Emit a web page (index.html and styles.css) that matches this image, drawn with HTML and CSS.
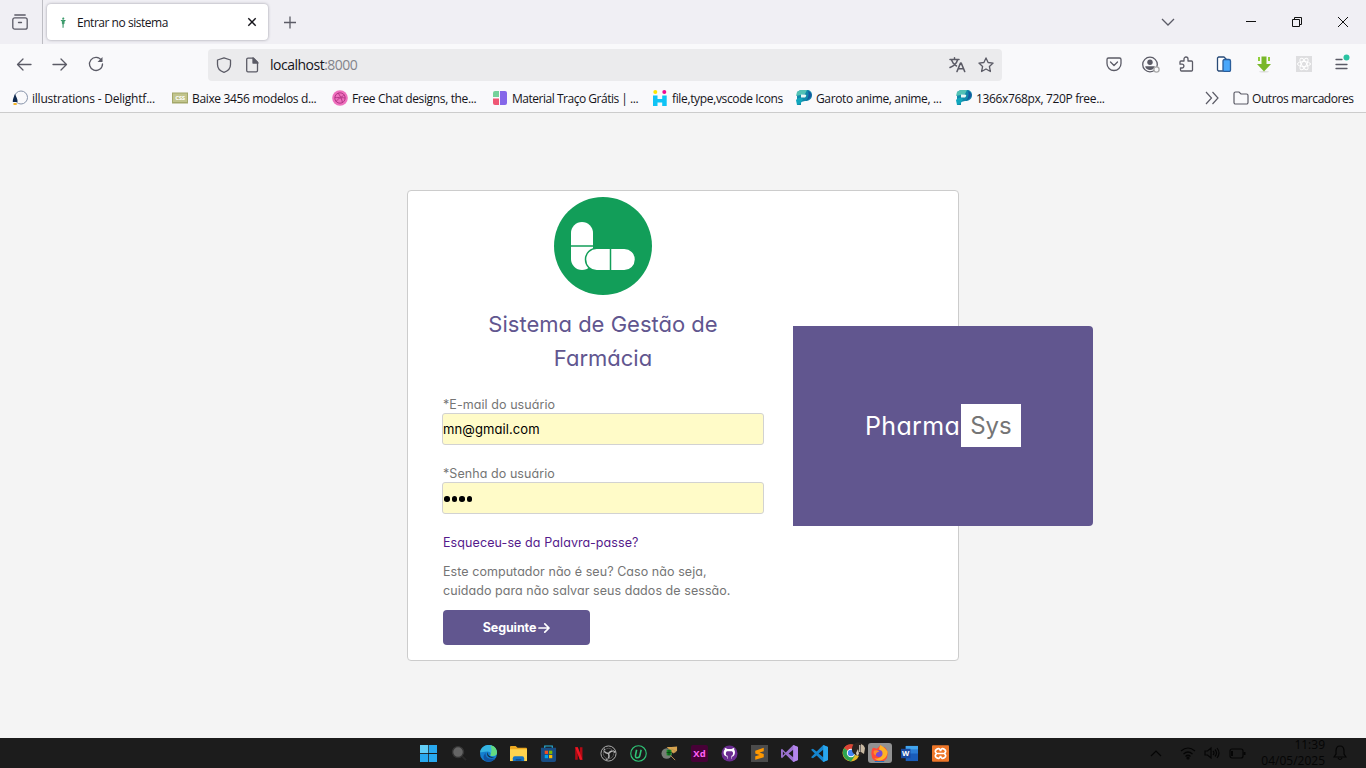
FILE: index.html
```html
<!DOCTYPE html>
<html lang="pt">
<head>
<meta charset="utf-8">
<title>Entrar no sistema</title>
<link rel="stylesheet" href="styles.css">
</head>
<body>
<header class="browser">
  <div class="tabs">
    <div class="recent"><svg width="16" height="16" viewBox="0 0 16 16" fill="none" stroke="#5b5b66" stroke-width="1.3" stroke-linecap="round"><path d="M2.800 1h10.400"/><rect x=".8" y="3.800" width="14.400" height="11.400" rx="2"/><path d="M6.500 8.500h3"/></svg></div>
    <div class="tab">
      <svg class="fav" width="16" height="16" viewBox="0 0 16 16"><circle cx="8.300" cy="4.500" r="1" fill="#2a9560"/><path d="M5.500 6h5.500l-1.500 1.500v2l-1 1v3h-.8v-3l-.8-1V7.500z" fill="#2a9560"/><path d="M8 4v10" stroke="#64a987" stroke-width=".7"/></svg>
      <span class="tabname">Entrar no sistema</span>
      <svg width="16" height="16" viewBox="0 0 16 16" stroke="#15141a" stroke-width="1.400"><path d="m4.300 4.300 7.400 7.400m0-7.400-7.400 7.400"/></svg>
    </div>
    <svg class="plus" width="16" height="16" viewBox="0 0 16 16" stroke="#5b5b66" stroke-width="1.300"><path d="M2 8.500h12M8 2.500v12"/></svg>
    <div class="winctl">
      <svg width="16" height="16" viewBox="0 0 16 16" fill="none" stroke="#5b5b66" stroke-width="1.300"><path d="m2 5 6 6 6-6"/></svg>
      <svg width="12" height="12" viewBox="0 0 12 12" stroke="#111"><path d="M1 5.500h10"/></svg>
      <svg width="12" height="12" viewBox="0 0 12 12" fill="none" stroke="#111"><path d="M1.500 3.500h7v7h-7zM3.500 3.500v-2h7v7h-2"/></svg>
      <svg width="12" height="12" viewBox="0 0 12 12" fill="none" stroke="#111"><path d="m1 1 10 10m0-10L1 11"/></svg>
    </div>
  </div>
  <div class="nav">
    <div class="history">
      <svg width="16" height="16" viewBox="0 0 16 16"><path d="M15 8.500H1.500M7 3 1.500 8.500 7 14"/></svg>
      <svg width="16" height="16" viewBox="0 0 16 16"><path d="M1 8.500h13.500M9 3l5.500 5.500L9 14"/></svg>
      <svg width="16" height="16" viewBox="0 0 16 16"><path d="M13.500 4.500A6.500 6.500 0 1 0 14.500 8"/><path d="M14.500 1v5h-5z" fill="#5b5b66" stroke="none"/></svg>
    </div>
    <div class="url">
      <svg width="16" height="16" viewBox="0 0 16 16"><path d="M8 .8 14.500 3v4.500c0 4-3 6.700-6.500 7.800-3.500-1.100-6.500-3.800-6.500-7.800V3z"/></svg>
      <svg width="16" height="16" viewBox="0 0 16 16"><path d="M4 1.200h5.500l4 4v8.300a1.300 1.300 0 0 1-1.300 1.300H4a1.300 1.300 0 0 1-1.300-1.300v-11A1.300 1.300 0 0 1 4 1.200z"/><path d="M9 1v5h5z" fill="#5b5b66"/></svg>
      <span class="address">localhost<i>:8000</i></span>
      <svg width="17" height="16" viewBox="0 0 17 16"><path d="M1 2.500h9M5.500.800v1.700M2.500 3c1 3 3 5 5 6M8.500 3c-1 3.500-3.500 6-7.500 7.500" stroke-width="1.500"/><path d="m8 14.500 3.500-8.500h.7l3.500 8.500M9.500 11.800h4.700" stroke-width="1.600"/></svg>
      <svg width="16" height="16" viewBox="0 0 16 16"><path d="m8 .9 2.100 4.600 5 .6-3.700 3.400 1 5L8 12l-4.400 2.500 1-5L.9 6.100l5-.6z"/></svg>
    </div>
    <div class="tools">
      <svg width="16" height="16" viewBox="0 0 16 16"><path d="M2.500 2h11A1.500 1.500 0 0 1 15 3.500v4a7 7 0 0 1-14 0v-4A1.500 1.500 0 0 1 2.500 2zM4.500 6 8 9.500 11.500 6"/></svg>
      <svg width="18" height="17" viewBox="0 0 18 17"><circle cx="8" cy="8.500" r="7.300"/><g fill="#5b5b66" stroke="none"><circle cx="8" cy="6.300" r="2.700"/><path d="M3.200 10.300h9.600c-.5 5-9 5-9.600 0z"/></g><circle cx="14.500" cy="13.500" r="2.600" fill="#f9f9fb" stroke="#aaa"/></svg>
      <svg width="16" height="16" viewBox="0 0 16 16"><path d="M6 5V3a2 2 0 0 1 4 0v2h3.500a1 1 0 0 1 1 1v8a1 1 0 0 1-1 1h-10a1 1 0 0 1-1-1v-2H4a1.800 1.800 0 0 0 0-3.800H2V6a1 1 0 0 1 1-1z"/></svg>
      <svg width="16" height="16" viewBox="0 0 16 16"><path d="M7 15H2.500L1.500 14V2l1-1H8l2 2" fill="#fff" stroke="#294b78"/><rect x="7" y="3.500" width="7.500" height="12" rx="1.500" fill="#4aa8fb" stroke="#2a5d9a"/></svg>
      <svg width="16" height="17" viewBox="0 0 16 17"><ellipse cx="8" cy="15.800" rx="5" ry=".8" fill="#ddd" stroke="none"/><path d="M5.500.5h5V8H15l-7 7.500L1 8h4.500z" fill="#79b72a" stroke="none"/><path d="M2 1v4h2V1zm10 0v4h2V1z" fill="#91cf3a" stroke="none"/></svg>
      <svg width="16" height="16" viewBox="0 0 16 16"><path d="M0 0h16v16H0z" fill="#dedee0" stroke="none"/><g stroke="#fff" stroke-width="1"><ellipse cx="8" cy="8" rx="6.500" ry="2.500"/><ellipse cx="8" cy="8" rx="6.500" ry="2.500" transform="rotate(60 8 8)"/><ellipse cx="8" cy="8" rx="6.500" ry="2.500" transform="rotate(120 8 8)"/></g></svg>
      <svg width="17" height="20" viewBox="0 0 17 20"><path d="M2 5.500h6M2 10.500h11M2 14.500h11" stroke-width="1.300"/><circle cx="12.500" cy="3.500" r="3" fill="#2ac3a2" stroke="none"/></svg>
    </div>
  </div>
  <div class="bookmarks">
    <a class="b1"><svg width="16" height="16" viewBox="0 0 16 16"><circle cx="9" cy="7.500" r="6.500" fill="none" stroke="#8894aa"/><path d="M3 4c1 3 3 5 2.500 8H.8C.5 9 2 7 3 4z" fill="#102a50"/><path d="M1.500 13h3.200v2H1.500z" fill="#f3b52c"/></svg><span>illustrations - Delightf...</span></a>
    <a class="b2"><svg width="16" height="16" viewBox="0 0 16 16"><path d="M0 2.500h16v11H0z" fill="#a3a769"/><path d="M1 3.500h14v8.500H1z" fill="#c1c48c"/><text x="8" y="10.300" text-anchor="middle" font-size="6" font-weight="bold" fill="#fff">CSS</text></svg><span>Baixe 3456 modelos d...</span></a>
    <a class="b3"><svg width="16" height="16" viewBox="0 0 16 16"><circle cx="8" cy="8" r="7.800" fill="#ee70bd"/><g fill="none" stroke="#b53788"><circle cx="8" cy="8" r="5.200"/><path d="M3 7.500c4 .5 8-.5 9-3M6 3c2 2.500 4 6 4.500 10M4 12c1.500-3.500 5-5 9-4"/></g></svg><span>Free Chat designs, the...</span></a>
    <a class="b4"><svg width="16" height="16" viewBox="0 0 16 16"><path d="M3 1h4v6H1V3q0-2 2-2z" fill="#75d19a"/><path d="M1 8.500h6V15H3q-2 0-2-2z" fill="#ef5674"/><path d="M8 1h5q2 0 2 2v10q0 2-2 2H8z" fill="#8567e9"/></svg><span>Material Traço Grátis | ...</span></a>
    <a class="b5"><svg width="16" height="16" viewBox="0 0 16 16"><circle cx="3.300" cy="2" r="2" fill="#fee500"/><circle cx="12.300" cy="2" r="2" fill="#f20a91"/><path d="M1 5.500h4.500V9h4.700V5.500h4.500V16h-4.500v-3.500H5.500V16H1z" fill="#10c3f5"/></svg><span>file,type,vscode Icons</span></a>
    <a class="b6"><svg width="16" height="16" viewBox="0 0 16 16"><path d="M1 2 5 0h6c3 0 5 2 5 5 0 4-3 6-7 6l-4 1v3H1z" fill="#1189aa"/><path d="M1 2 4 0h7L9 4 0 6z" fill="#52c2b5"/><path d="M5 4.500h4q2.500 1 0 3H5z" fill="#e8faf6"/><path d="M0 10q3-4 7-1l-2 4-4 2z" fill="#10a6bc"/><path d="M12 1q6 3 2 7l-4 3q4-5 2-10z" fill="#1758a0"/></svg><span>Garoto anime, anime, ...</span></a>
    <a class="b7"><svg width="16" height="16" viewBox="0 0 16 16"><path d="M1 2 5 0h6c3 0 5 2 5 5 0 4-3 6-7 6l-4 1v3H1z" fill="#1189aa"/><path d="M1 2 4 0h7L9 4 0 6z" fill="#52c2b5"/><path d="M5 4.500h4q2.500 1 0 3H5z" fill="#e8faf6"/><path d="M0 10q3-4 7-1l-2 4-4 2z" fill="#10a6bc"/><path d="M12 1q6 3 2 7l-4 3q4-5 2-10z" fill="#1758a0"/></svg><span>1366x768px, 720P free...</span></a>
    <svg class="more" width="16" height="16" viewBox="0 0 16 16" fill="none" stroke="#5b5b66" stroke-width="1.200"><path d="m2 2 5.500 6L2 14M8.500 2 14 8l-5.500 6"/></svg>
    <a class="b8"><svg width="16" height="16" viewBox="0 0 16 16" fill="none" stroke="#5b5b66" stroke-width="1.200"><path d="M2.500 2H6l2 2h5.500A1.500 1.500 0 0 1 15 5.500v7a1.500 1.500 0 0 1-1.500 1.500h-11A1.500 1.500 0 0 1 1 12.500v-9A1.500 1.500 0 0 1 2.500 2z"/></svg><span>Outros marcadores</span></a>
  </div>
</header>
<main class="page">
  <section class="card">
    <form class="login">
      <svg class="logo" width="98" height="98" viewBox="0 0 98 98"><circle cx="49" cy="49" r="49" fill="#129e59"/><rect x="17" y="25" width="22" height="48" rx="11" fill="#fff"/><path d="M17 49h22" stroke="#129e59" stroke-width="1.500"/><rect x="31.500" y="51.300" width="50" height="22.400" rx="11.200" fill="#fff" stroke="#129e59" stroke-width="1.500"/><path d="M56.500 52v21" stroke="#129e59" stroke-width="1.500"/></svg>
      <h1><span class="t1">Sistema de Gestão de</span><br><span class="t2">Farmácia</span></h1>
      <label for="mail">*E-mail do usuário</label>
      <input id="mail" type="text" value="mn@gmail.com">
      <label for="pass">*Senha do usuário</label>
      <div class="password" id="pass"><i></i><i></i><i></i><i></i></div>
      <a class="forgot">Esqueceu-se da Palavra-passe?</a>
      <p><span class="p1">Este computador não é seu? Caso não seja,</span><br><span class="p2">cuidado para não salvar seus dados de sessão.</span></p>
      <button type="button"><span>Seguinte</span><svg width="12" height="12" viewBox="0 0 12 12" fill="none" stroke="#fff" stroke-width="1.700" stroke-linecap="round" stroke-linejoin="round"><path d="M1 6h10M6.800 1.800 11 6 6.800 10.200"/></svg></button>
    </form>
    <aside class="brand"><span class="pharma">Pharma</span><span class="sys"><span>Sys</span></span></aside>
  </section>
</main>
<footer class="taskbar">
  <div class="apps">
    <div><svg viewBox="0 0 18 18"><path d="M0 0h8.600v8.600H0zm9.400 0H18v8.600H9.400zM0 9.400h8.600V18H0zm9.400 0H18V18H9.400z" fill="#28a8ee"/><path d="M0 0h8.600v8.600H0z" fill="#62cef7"/></svg></div>
    <div><svg viewBox="0 0 18 18"><circle cx="8.500" cy="7.500" r="5.800" fill="#656565" stroke="#353535" stroke-width="1.500"/><path d="m13 12 4 4" stroke="#292929" stroke-width="2"/></svg></div>
    <div><svg viewBox="0 0 18 18"><circle cx="9" cy="9" r="9" fill="#147fce"/><path d="M0 8C1-2 17-3 18 8c0 4-5 5-7 3 1-2 0-4-3-4-4 0-6 1-8 1z" fill="#35b4e1"/><path d="M11 .3c5 1 7 4 7 8 0 3-4 4-7 3 1-4 2-7 0-11z" fill="#63db80"/><path d="M6 8c-1 5 4 8 10 6-5 7-14 3-12-3z" fill="#1154a2"/><path d="M8.500 7.500c-1 4 3 6 8 5l-4 1c-4 0-6-3-4-6z" fill="#16202a"/></svg></div>
    <div><svg viewBox="0 0 18 18"><path d="M0 2q0-1 1-1h5l2 2h9q1 0 1 1v12H0z" fill="#eca820"/><path d="M0 4.500h18V17H0z" fill="#ffd34e"/><path d="M3 14q0-2 2-2h8q2 0 2 2v3H3z" fill="#1673c5"/><path d="M6 15h6v1.500H6z" fill="#104c8b"/></svg></div>
    <div><svg viewBox="0 0 18 18"><path d="M5 4V1h8v3" fill="none" stroke="#27b4dc" stroke-width="1.200"/><path d="M1 3h16v13q0 2-2 2H3q-2 0-2-2z" fill="#194c83"/><path d="M5 6h3.500v3.500H5z" fill="#f25022"/><path d="M9.500 6H13v3.500H9.500z" fill="#7fba00"/><path d="M5 10.500h3.500V14H5z" fill="#00a4ef"/><path d="M9.500 10.500H13V14H9.500z" fill="#ffb900"/></svg></div>
    <div><svg viewBox="0 0 18 18"><path d="M5.500 2.500h2.700L10.500 9V2.500h2.700v13h-2.700L8.200 9v6.500H5.500z" fill="#b30a14"/><path d="M5.500 2.500h2.700l5 13h-2.700z" fill="#ef1724"/></svg></div>
    <div><svg viewBox="0 0 18 18" fill="none" stroke="#b7b7b7"><circle cx="9" cy="9" r="8"/><path d="M9 9Q3 8 5 4m4 5q4-5 7-1M9 9q2 6-3 6" stroke-width="1.600"/><circle cx="9" cy="9" r="5.500" stroke="#555"/></svg></div>
    <div><svg viewBox="0 0 18 18" fill="none" stroke="#2fc477"><circle cx="9" cy="9" r="8.200" stroke-width="1.200"/><path d="m7 5-1.200 6q-.3 2.500 2 2.500t2.700-2.500L11.800 5" stroke-width="1.700"/></svg></div>
    <div><svg viewBox="0 0 18 18"><circle cx="6" cy="9" r="5.500" fill="#777e77"/><path d="M6 2h5l6-.5V6l-4 3z" fill="#d7a34f"/><path d="M6 5h5v6H6z" fill="#168824"/><path d="m11 4 5 3-3 1M10 11l5 5" stroke="#bd9251" fill="none"/><path d="M8.500 5v6M6 8h5" stroke="#083b10" stroke-width=".8"/></svg></div>
    <div><svg viewBox="0 0 18 18"><rect width="18" height="18" rx="2" fill="#470137"/><text x="9" y="12.500" text-anchor="middle" font-size="10" font-weight="bold" fill="#ff61f6">Xd</text></svg></div>
    <div><svg viewBox="0 0 18 18"><circle cx="9" cy="9" r="8.500" fill="#6b2c91"/><path d="M6.500 14.500v-2C1 11 3 5 4 5V3l3 1.300h4L14 3v2c2 3 0 7-2.500 7.500v2" fill="#fff"/><path d="M6.500 11.500C4.500 10.500 5 7 6.500 6.500h5c2 1 1.500 4.500-.5 5V15H7v-3.500z" fill="#6b2c91"/></svg></div>
    <div><svg viewBox="0 0 18 18"><path d="M0 0h18v18H0z" fill="#4b4b4b"/><path d="m4.500 6 9-3v3.500L9 8l4.500 1.500V13l-9 2.500V12L9 10.500 4.500 9z" fill="#ff9800"/></svg></div>
    <div><svg viewBox="0 0 18 18"><path d="m13 0 5 2v14l-5 2L5 10l-4 4-1-1V5l1-1 4 4zM13 5 8 9l5 4zM2 7v4l2-2z" fill="#9b72d0" fill-rule="evenodd"/><path d="m13 0 5 2v14l-5 2z" fill="#b485ed"/></svg></div>
    <div><svg viewBox="0 0 18 18"><path d="m13 0 5 2v14l-5 2-7-7-4 3-2-1 4-4-4-4 2-1 4 3zm0 5L8 9l5 4z" fill="#1686cf" fill-rule="evenodd"/><path d="m13 0 5 2v14l-5 2z" fill="#29a6ed"/></svg></div>
    <div><svg class="chrome" viewBox="0 0 24 20"><circle cx="9" cy="11" r="8.500" fill="#e9b927"/><path d="M9 11 2 6c4-6 12-4 14 1H9z" fill="#dc4437"/><path d="m9 11-7-5c-3 6 0 12 7 13.500l4-6z" fill="#2da351"/><circle cx="9" cy="11" r="4.200" fill="#fff"/><circle cx="9" cy="11" r="3.200" fill="#4285f4"/><circle cx="16.500" cy="7" r="6.700" fill="#292421"/><path d="M19 2q3 1 4 4l-1 6-3-2z" fill="#c8b9a1"/><path d="m14 11 2-4 1 5-2 2z" fill="#d5c8b8"/><path d="M17 3h1.500v7H17z" fill="#b9aea5"/></svg></div>
    <div class="current"><svg viewBox="0 0 18 18"><path d="M2 3q2 0 4 1 2-1 4-4l3 4q0-2 1-2 4 3 3.500 8A8.500 8.500 0 0 1 .5 10Q0 6 2 3z" fill="#ff4b36"/><path d="M10 0q6 4 7.500 7c0 9-9 12-14 7 4 1 8-1 8-4 0-5-5-3-1.500-10z" fill="#ffb224"/><circle cx="8.500" cy="9" r="3.700" fill="#794bd0"/><path d="M3 6q4-1 6 1-4 1-4 4-3-1-2-5z" fill="#ff8b2a"/><path d="M4 17h10v1H4z" fill="#1673c5"/></svg></div>
    <div><svg viewBox="0 0 18 18"><path d="M5 1h13v16H5z" fill="#195cba"/><path d="M5 1h13v4H5z" fill="#42a5ee"/><path d="M5 5h13v4H5z" fill="#2b7dd6"/><path d="M0 4h10v10H0z" fill="#1849a0"/><text x="5" y="12" text-anchor="middle" font-size="8" font-weight="bold" fill="#fff">W</text></svg></div>
    <div><svg viewBox="0 0 18 18"><rect y=".3" width="18" height="17.500" rx="1" fill="#ed7628"/><path d="M5 4.500q3-2 4 2 1-4 4-2t0 4.500q3 2.500 0 4.500t-4-2q-1 4-4 2T5 9q-3-2.500 0-4.500zM6 9h6" fill="none" stroke="#fff" stroke-width="1.800"/></svg></div>
  </div>
  <div class="tray">
    <svg width="12" height="12" viewBox="0 0 12 12"><path d="m1 9 5-5 5 5"/></svg>
    <svg width="16" height="14" viewBox="0 0 16 14"><path d="M1 5q7-6 14 0M3.500 8Q8 4 12.500 8M5.500 10.500Q8 8 10.500 10.500"/><circle cx="8" cy="12" r="1"/></svg>
    <svg width="17" height="14" viewBox="0 0 17 14"><path d="M1 5h2.500L7 2v10L3.500 9H1zM9 5q2 2 0 4M11 3.500q3 3.500 0 7M13 2q4 5 0 10"/></svg>
    <svg width="17" height="12" viewBox="0 0 17 12"><rect x="1" y="2" width="13" height="9" rx="2"/><path d="M3 4v5M15.500 5v3" stroke-width="2"/></svg>
    <time><span>11:39</span><span>04/05/2025</span></time>
    <svg width="14" height="16" viewBox="0 0 14 16"><path d="M1 12h12l-2-3V6Q11 1 7 1T3 6v3zM5 13q2 3 4 0"/></svg>
  </div>
</footer>
</body>
</html>
```
FILE: styles.css
```css
* { box-sizing: border-box; }
body { margin: 0; width: 1366px; height: 768px; overflow: hidden; display: flex; flex-direction: column; font-family: "Open Sans", "Noto Sans", sans-serif; background: #f4f4f4; }
svg { flex: none; display: block; }
.browser { height: 113px; flex: none; border-bottom: 1px solid #ccc; background: #f9f9fb; color: #15141a; }
.tabs { height: 44px; background: #f0eff4; display: flex; }
.recent { width: 43px; padding: 14px 0 0 12px; border-right: 1px solid #bdbdc3; }
.tab { margin: 4px 0 4px 4px; width: 221px; border-radius: 4px; background: #fff; box-shadow: 0 0 3px #9998a2; display: flex; align-items: center; padding: 0 8px; font-size: 12px; }
.tabname { margin-left: 6px; width: 167px; letter-spacing: -.47px; padding-top: 1px; white-space: nowrap; }
.plus { margin: 14px 0 0 14px; }
.winctl { margin-left: auto; display: flex; align-items: center; padding-right: 17px; gap: 34px; }
.winctl svg:first-child { margin-right: 35px; }
.nav { height: 40px; display: flex; align-items: center; }
.history { width: 208px; padding-left: 16px; display: flex; gap: 20px; }
.history svg, .url svg, .tools svg { fill: none; stroke: #5b5b66; stroke-width: 1.3; stroke-linejoin: round; stroke-linecap: round; }
.url { width: 794px; height: 32px; margin-top: 1px; border-radius: 4px; background: #ebebed; display: flex; align-items: center; padding: 0 8px; gap: 12px; font-size: 14px; }
.address { flex: 1; letter-spacing: -.5px; margin-left: -2px; }
.address i { font-style: normal; color: #84848b; }
.tools { margin-left: 104px; display: flex; align-items: center; }
.tools svg:nth-child(2) { margin-left: 20px; }
.tools svg:nth-child(3) { margin-left: 18px; }
.tools svg:nth-child(4) { margin-left: 22px; }
.tools svg:nth-child(5) { margin-left: 24px; }
.tools svg:nth-child(6) { margin-left: 24px; }
.tools svg:nth-child(7) { margin-left: 22px; }
.bookmarks { height: 28px; display: flex; align-items: center; font-size: 12px; padding-left: 12px; }
.bookmarks a { display: flex; gap: 4px; white-space: nowrap; align-items: center; letter-spacing: -.35px; flex: none; }
.bookmarks a span { padding-top: 1px; }
.bookmarks .b1 { width: 160px; letter-spacing: -.22px; }
.b2 { width: 160px; }
.b3 { width: 160px; }
.bookmarks .b4 { width: 160px; letter-spacing: -.48px; }
.b5 { width: 144px; }
.b6 { width: 160px; }
.b7 { width: 248px; }
.more { margin-right: 13px; }
.bookmarks .b8 { gap: 3px; letter-spacing: -.43px; }
.page { flex: 1; display: flex; align-items: flex-start; justify-content: center; padding-top: 77px; font-family: Inter, sans-serif; font-feature-settings: "cv11"; color: #757575; }
.card { width: 552px; height: 471px; background: #fff; border: 1px solid #ccc; border-radius: 4px; display: flex; align-items: center; gap: 30px; padding-left: 35px; }
.login { width: 320px; flex: none; height: 469px; padding-top: 6px; display: flex; flex-direction: column; font-size: 12.5px; white-space: nowrap; }
.logo { align-self: center; }
h1 { margin: 12px 0 20px; font-weight: 400; font-size: 22px; line-height: 34px; color: #61568f; text-align: center; }
.login label { height: 18px; line-height: 20px; letter-spacing: .07px; }
.login input, .password { width: 322px; height: 32px; margin: 0 0 19px -1px; padding: 0; border: 1px solid #d2d2d2; border-radius: 3px; background: #fffbc8; color: #000; font: 13px Inter, sans-serif; font-feature-settings: "cv11"; letter-spacing: .09px; }
.password { display: flex; align-items: center; gap: 2px; padding: 2px 0 0 1px; }
.password i { width: 5.500px; height: 5.500px; border-radius: 50%; background: #000; }
.forgot { color: #551a8b; line-height: 20px; height: 19px; letter-spacing: .1px; }
.login p { margin: 10px 0; line-height: 19px; letter-spacing: .06px; }
.login button { width: 147px; height: 35px; border: 0; border-radius: 4px; background: #61568f; color: #fff; font: 700 12.5px Inter, sans-serif; font-feature-settings: "cv11"; letter-spacing: -.12px; display: flex; align-items: center; justify-content: center; gap: 2px; padding: 0; }
.brand { width: 300px; height: 200px; flex: none; background: #61568f; border-radius: 0 4px 4px 0; color: #fff; display: flex; align-items: center; justify-content: center; font-size: 24px; }
.pharma { width: 96px; white-space: nowrap; font-size: 25px; letter-spacing: .35px; }
.sys { width: 60px; height: 43px; background: #fff; color: #757575; display: flex; align-items: center; justify-content: center; }
.taskbar { height: 30px; background: #1c1c1c; display: flex; align-items: center; padding-left: 413px; }
.apps { display: flex; width: 542px; }
.apps > div { flex: 1; height: 30px; display: flex; align-items: center; justify-content: center; }
.apps svg { width: 17px; height: 17px; }
.apps .chrome { width: 24px; height: 20px; margin: 0 -4px 2px 4px; }
.apps .current { flex: none; width: 24px; height: 20px; margin: 5px 3px; background: #929292; border-radius: 3px; }
.tray { margin-left: 195px; display: flex; align-items: center; gap: 8px; }
.tray svg { fill: none; stroke: #050505; stroke-width: 1.2; }
.tray svg:first-child { margin-right: 10px; }
time { width: 71px; font-size: 12px; line-height: 16px; color: #050505; display: flex; flex-direction: column; align-items: flex-end; }
```
